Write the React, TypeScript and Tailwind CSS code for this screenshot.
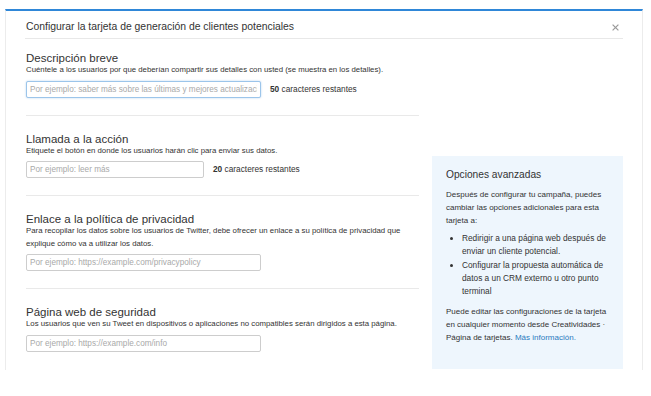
import { useState } from 'react';

type Field = {
  title: string;
  help: string;
  placeholder: string;
  width: string;
  limit?: number;
  focused?: boolean;
};

const fields: Field[] = [
  {
    title: 'Descripción breve',
    help: 'Cuéntele a los usuarios por que deberían compartir sus detalles con usted (se muestra en los detalles).',
    placeholder: 'Por ejemplo: saber más sobre las últimas y mejores actualizaciones',
    width: 'w-[235px]',
    limit: 50,
    focused: true,
  },
  {
    title: 'Llamada a la acción',
    help: 'Etiquete el botón en donde los usuarios harán clic para enviar sus datos.',
    placeholder: 'Por ejemplo: leer más',
    width: 'w-[178px]',
    limit: 20,
  },
  {
    title: 'Enlace a la política de privacidad',
    help: 'Para recopilar los datos sobre los usuarios de Twitter, debe ofrecer un enlace a su política de privacidad que explique cómo va a utilizar los datos.',
    placeholder: 'Por ejemplo: https://example.com/privacypolicy',
    width: 'w-[235px]',
  },
  {
    title: 'Página web de seguridad',
    help: 'Los usuarios que ven su Tweet en dispositivos o aplicaciones no compatibles serán dirigidos a esta página.',
    placeholder: 'Por ejemplo: https://example.com/info',
    width: 'w-[235px]',
  },
];

function FieldBlock({ field, first, last }: { field: Field; first: boolean; last: boolean }) {
  const [value, setValue] = useState('');

  return (
    <div className={`${first ? 'pt-[12px]' : 'pt-[16px]'} ${last ? '' : 'pb-[17px] border-b border-[#e9e9e9]'}`}>
      <h2 className="text-[11.5px] leading-[14px] text-[#333]">{field.title}</h2>
      <p className="-mt-[1px] text-[7.8px] leading-[12.5px] text-[#333]">{field.help}</p>
      <div className="mt-[4px] flex items-center">
        <input
          value={value}
          onChange={(e) => setValue(e.target.value)}
          placeholder={field.placeholder}
          className={`${field.width} h-[17px] rounded-[2px] border bg-white px-[3px] text-[8.2px] text-[#333] placeholder-[#a9a9a9] outline-none ${
            field.focused
              ? 'border-[#9cc5ea] shadow-[0_0_2px_rgba(80,150,220,0.45)]'
              : 'border-[#cdcdcd]'
          }`}
        />
        {field.limit !== undefined && (
          <span className="ml-[9px] text-[8.3px] text-[#333]">
            <b className="font-bold">{field.limit - value.length}</b> caracteres restantes
          </span>
        )}
      </div>
    </div>
  );
}

export default function App() {
  return (
    <div className="min-h-[396px] w-[651px] bg-white pt-[9px] pl-[5px] font-['Liberation_Sans',Arial,sans-serif]">
      <div className="h-[361px] w-[638px] border-x border-t-2 border-x-[#ececec] border-t-[#2f87d8] bg-white">
        {/* Header */}
        <div className="mx-[19px] flex items-start justify-between border-b border-[#e8e8e8] pt-[9px] pb-[4px]">
          <h1 className="pl-[1px] text-[10.4px] leading-[14px] text-[#333]">
            Configurar la tarjeta de generación de clientes potenciales
          </h1>
          <button className="mr-[4px] mt-[4px] text-[#9a9a9a]" aria-label="Cerrar">
            <svg width="7" height="7" viewBox="0 0 7 7">
              <path d="M0.6 0.6 L6.4 6.4 M6.4 0.6 L0.6 6.4" stroke="currentColor" strokeWidth="1.2" />
            </svg>
          </button>
        </div>

        {/* Body */}
        <div className="flex pl-[20px]">
          <div className="w-[393px]">
            {fields.map((f, i) => (
              <FieldBlock key={f.title} field={f} first={i === 0} last={i === fields.length - 1} />
            ))}
          </div>

          <aside className="ml-[13px] mt-[117px] h-[213px] w-[191px] bg-[#eef6fd] px-[14px] pt-[12px] text-[#333]">
            <h3 className="text-[10.2px] leading-[13px]">Opciones avanzadas</h3>
            <p className="mt-[7px] text-[8px] leading-[13px]">
              Después de configurar tu campaña, puedes cambiar las opciones adicionales para esta tarjeta a:
            </p>
            <ul className="mt-[5px] list-disc pl-[16px] text-[8.3px] leading-[13.3px]">
              <li>Redirigir a una página web después de enviar un cliente potencial.</li>
              <li>Configurar la propuesta automática de datos a un CRM externo u otro punto terminal</li>
            </ul>
            <p className="mt-[7px] text-[8px] leading-[13px]">
              Puede editar las configuraciones de la tarjeta en cualquier momento desde Creatividades · Página de
              tarjetas.{' '}
              <a href="#" className="text-[#2b7bc0]">
                Más información.
              </a>
            </p>
          </aside>
        </div>
      </div>
    </div>
  );
}
